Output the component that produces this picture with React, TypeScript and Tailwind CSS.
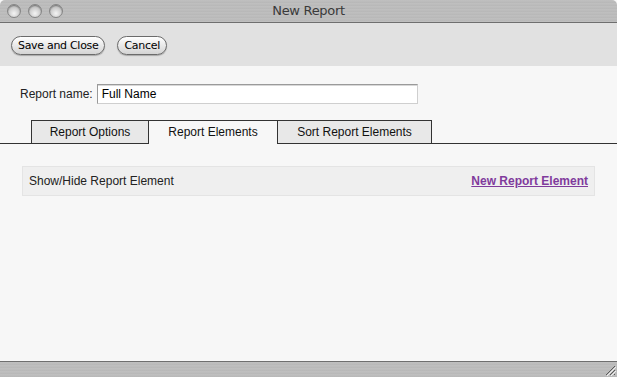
import React from "react";

function Light() {
  return (
    <div className="h-[14px] w-[14px] rounded-full border border-[#858585] bg-[radial-gradient(circle_at_50%_70%,#f4f4f4_0%,#cacaca_55%,#9a9a9a_100%)] shadow-[inset_0_1px_1px_rgba(0,0,0,0.3)]" />
  );
}

function AquaButton({ children }: { children: React.ReactNode }) {
  return (
    <button className="h-[19px] rounded-full border border-[#6b6b6b] bg-gradient-to-b from-[#ffffff] via-[#e9e9e9] to-[#d4d4d4] px-[6px] text-[11px] leading-[17px] text-black shadow-[0_1px_1px_rgba(0,0,0,0.25)] [font-family:'DejaVu_Sans',sans-serif] tracking-[-0.3px]">
      {children}
    </button>
  );
}

const metal =
  "bg-[repeating-linear-gradient(180deg,#b9b9b9_0px,#c4c4c4_1px,#b4b4b4_2px,#bdbdbd_3px)]";

export default function App() {
  return (
    <div className="flex h-[377px] w-[617px] flex-col overflow-hidden bg-[#f7f7f7] [font-family:'Liberation_Sans',Arial,sans-serif]">
      {/* title bar */}
      <div className={`relative flex h-[23px] shrink-0 items-center border-b border-[#6e6e6e] rounded-t-[5px] ${metal}`}>
        <div className="flex gap-[7px] pl-[7px]">
          <Light />
          <Light />
          <Light />
        </div>
        <div className="absolute inset-x-0 top-0 flex h-[22px] items-center justify-center text-[13px] text-[#3a3a3a] [font-family:'DejaVu_Sans',sans-serif] tracking-[-0.3px]">
          New Report
        </div>
      </div>

      {/* toolbar */}
      <div className="flex h-[43px] shrink-0 items-center gap-[12px] bg-[#e1e1e1] pl-[11px] pt-[1px]">
        <AquaButton>Save and Close</AquaButton>
        <AquaButton>Cancel</AquaButton>
      </div>

      {/* content */}
      <div className="flex flex-1 flex-col">
        <div className="flex items-center pl-[20px] pt-[18px]">
          <span className="text-[12px] text-[#222]">Report name:</span>
          <div className="ml-[4px] flex h-[20px] w-[321px] items-center border border-[#9a9a9a] border-b-[#cfcfcf] border-r-[#cfcfcf] bg-white px-[4px] text-[12px] text-black shadow-[inset_0_1px_0_#d8d8d8]">
            Full Name
          </div>
        </div>

        <div className="mt-[16px] flex border-b border-[#333] pl-[31px]">
          <div className="flex h-[23px] w-[118px] items-center justify-center border border-b-0 border-[#333] bg-[#e8e8e8] text-[12px] text-[#111]">
            Report Options
          </div>
          <div className="-mb-px flex h-[24px] w-[128px] items-center justify-center border-t border-[#333] bg-[#f7f7f7] pb-px text-[12px] text-[#111]">
            Report Elements
          </div>
          <div className="flex h-[23px] w-[155px] items-center justify-center border border-b-0 border-[#333] bg-[#e8e8e8] text-[12px] text-[#111]">
            Sort Report Elements
          </div>
        </div>

        <div className="ml-[22px] mr-[22px] mt-[22px] flex h-[30px] items-center justify-between border border-[#e4e4e4] bg-[#efefef] pl-[6px] pr-[6px]">
          <span className="text-[12px] text-[#222]">Show/Hide Report Element</span>
          <a className="text-[12px] font-bold text-[#803a9c] underline">New Report Element</a>
        </div>
      </div>

      {/* bottom bar */}
      <div className={`relative h-[16px] shrink-0 border-t border-[#6e6e6e] ${metal}`}>
        <svg className="absolute bottom-[1px] right-[1px]" width="12" height="12" viewBox="0 0 12 12">
          <path d="M11 2 L2 11 M11 6 L6 11 M11 10 L10 11" stroke="#5a5a5a" strokeWidth="1" />
          <path d="M12 3 L3 12 M12 7 L7 12" stroke="#f0f0f0" strokeWidth="1" />
        </svg>
      </div>
    </div>
  );
}
